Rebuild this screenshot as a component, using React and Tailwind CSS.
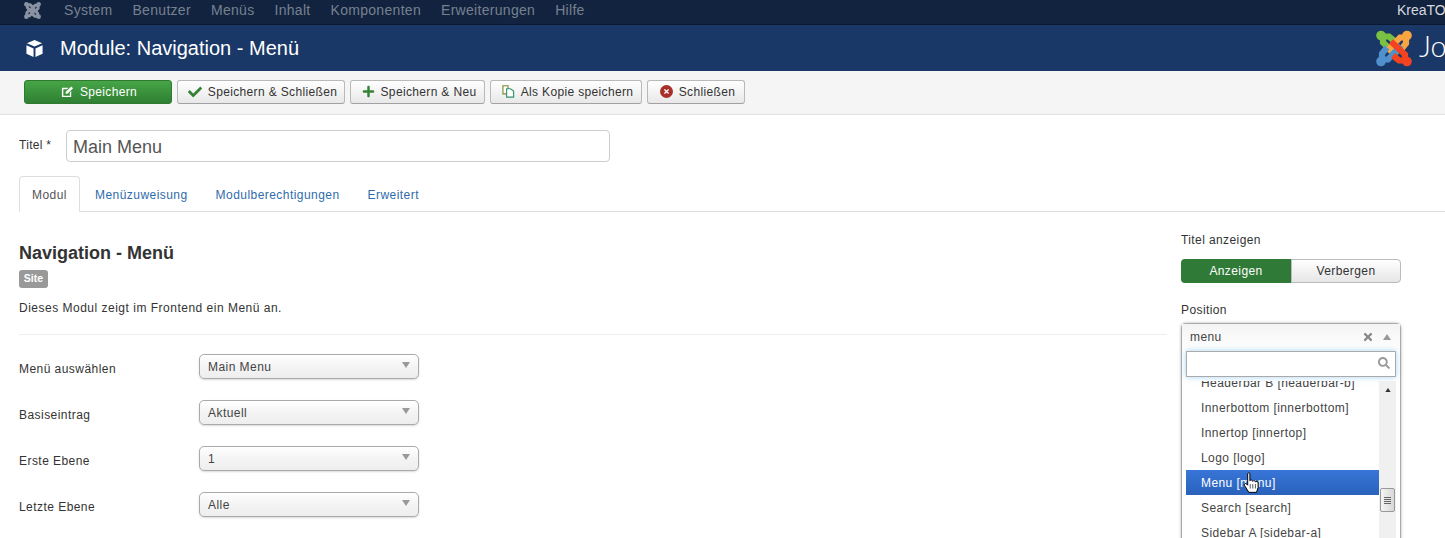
import React from "react";
import { FaCheck, FaPlus, FaTimes, FaSearch } from "react-icons/fa";

const navItems = ["System", "Benutzer", "Menüs", "Inhalt", "Komponenten", "Erweiterungen", "Hilfe"];

const JoomlaMark = ({ className, colors }) => (
    <svg viewBox="0 0 36 36" className={className} fill="none" strokeWidth="6.2">
        {[0, 90, 270, 180].map((angle) => {
            const color = colors[angle / 90];
            return (
                <g key={angle} transform={`rotate(${angle} 18 18)`}>
                    <path d="M19 11 L13 6 L7 6 L7 12 L21 25" stroke={color} />
                    <circle cx="5" cy="5" r="4.8" fill={color} />
                </g>
            );
        })}
    </svg>
);

const CubeIcon = () => (
    <svg viewBox="0 0 20 20" className="w-[19px] h-[19px]" fill="#fff">
        <path d="M10 1 L18 4.5 L10 8 L2 4.5 Z" />
        <path d="M1.5 6.5 L9 10 V19 L1.5 15.5 Z" />
        <path d="M18.5 6.5 L11 10 V19 L18.5 15.5 Z" />
    </svg>
);

const EditIcon = () => (
    <svg viewBox="0 0 14 14" className="w-[13px] h-[13px]">
        <path d="M1 3 H8 L6.5 4.5 H2.5 V11.5 H9.5 V8 L11 6.5 V13 H1 Z" fill="#fff" />
        <path d="M5 7.5 L11 1.5 L13 3.5 L7 9.5 H5 Z" fill="#fff" />
    </svg>
);

const CopyIcon = () => (
    <svg viewBox="0 0 14 14" className="w-[13px] h-[13px]" fill="#fff" strokeWidth="1.2">
        <path d="M1 .8 H6.5 V9.5 H1 Z" stroke="#7a8a2a" />
        <path d="M5 4 H9 L12.5 6.5 V13 H5 Z" stroke="#2f8f6f" />
    </svg>
);

const CloseIcon = () => (
    <span className="w-[13px] h-[13px] rounded-full bg-[#a9302a] flex items-center justify-center">
        <FaTimes className="text-white w-[7px] h-[7px]" />
    </span>
);

const Caret = ({ up, className }) => (
    <svg viewBox="0 0 8 6" className={className}>
        <path d={up ? "M0 6 L4 0 L8 6 Z" : "M0 0 L8 0 L4 6 Z"} fill="currentColor" />
    </svg>
);

const HandCursor = () => (
    <svg viewBox="0 0 14 20" className="absolute left-[1243px] top-[472px] w-[16px] h-[22px]">
        <path d="M4 1.5 C4 .5 6 .5 6 1.5 V8 C6.5 7 8.5 7 8.5 8.5 C9 7.5 11 7.5 11 9 C11.5 8.3 13.5 8.5 13.5 10 V14 L12 18.5 H5 L1 12 C.5 10.5 2 10 3 11 L4 12 Z" fill="#fff" stroke="#000" strokeWidth=".9" />
        <path d="M6.3 11 V15 M8.6 11 V15 M11 11 V15" stroke="#000" strokeWidth=".6" />
    </svg>
);

const ToolbarButton = ({ icon, label, className }) => (
    <button className={`h-[24px] pl-[3px] flex items-center justify-center gap-[6px] rounded-[3px] border border-[#b9b9b9] border-b-[#a2a2a2] bg-linear-to-b from-white to-[#e8e8e8] text-[12px] tracking-[0.35px] text-[#333] ${className}`}>
        {icon}
        {label}
    </button>
);

const SelectRow = ({ label, value }) => (
    <div className="flex items-center h-[26px] mb-[20px]">
        <span className="w-[180px] text-[12px] tracking-[0.45px] text-[#333] pt-[5px]">{label}</span>
        <div className="w-[220px] h-[25px] pl-[8px] pr-[8px] flex items-center justify-between rounded-[5px] border border-[#aaa] bg-linear-to-b from-white via-[#f4f4f4] to-[#eeeeee] shadow-[0_1px_2px_rgba(0,0,0,0.15)] text-[12px] tracking-[0.45px] text-[#444]">
            <span className="mt-[1px]">{value}</span>
            <Caret className="w-[8px] h-[6px] text-[#999] -mt-[2px]" />
        </div>
    </div>
);

const positionItems = [
    "Headerbar B [headerbar-b]",
    "Innerbottom [innerbottom]",
    "Innertop [innertop]",
    "Logo [logo]",
    "Menu [menu]",
    "Search [search]",
    "Sidebar A [sidebar-a]",
];

const TABS = ["Menüzuweisung", "Modulberechtigungen", "Erweitert"];

export default function App() {
    return (
        <div className="relative h-[538px] w-[1445px] overflow-hidden bg-white font-['Liberation_Sans',Arial,sans-serif] text-[#333]">
            {/* top nav */}
            <div className="h-[25px] flex items-center border-b border-[#0a1830] bg-[#12233f]">
                <div className="w-[64px] pl-[24px]">
                    <JoomlaMark className="w-[17px] h-[17px] -mt-[3px]" colors={["#8a93a3", "#8a93a3", "#8a93a3", "#8a93a3"]} />
                </div>
                <div className="flex gap-[20px] text-[14px] tracking-[0.3px] text-[#76818f] -mt-[4px]">
                    {navItems.map((item) => (
                        <span key={item}>{item}</span>
                    ))}
                </div>
                <span className="ml-auto -mr-[10px] w-[58px] shrink-0 text-[14px] text-[#d5d9df] -mt-[4px] whitespace-nowrap">KreaTOM</span>
            </div>

            {/* title bar */}
            <div className="h-[46px] flex items-center bg-[#1a3867] pl-[25px] overflow-hidden">
                <CubeIcon />
                <h1 className="ml-[16px] text-[20px] text-white -mt-[1px]">Module: Navigation - Menü</h1>
                <div className="ml-auto flex items-center w-[69px] shrink-0 overflow-hidden">
                    <JoomlaMark className="w-[36px] h-[37px] shrink-0" colors={["#7ac143", "#f9a541", "#f44321", "#5091cd"]} />
                    <span className="ml-[7px] -mt-[5px] font-['Lato',sans-serif] text-[29px] font-light text-white leading-none">Jo</span>
                </div>
            </div>

            {/* toolbar */}
            <div className="h-[44px] flex items-center gap-[5px] pl-[24px] bg-[#f5f5f5] border-b border-[#e3e3e3] pb-[2px]">
                <button className="w-[148px] h-[24px] pl-[2px] flex items-center justify-center gap-[6px] rounded-[3px] border border-[#2f7a30] bg-linear-to-b from-[#46a546] to-[#2f7f33] text-[12px] tracking-[0.35px] text-white">
                    <EditIcon />
                    Speichern
                </button>
                <ToolbarButton className="w-[168px]" label="Speichern & Schließen" icon={<FaCheck className="text-[#378137] w-[14px] h-[14px]" />} />
                <ToolbarButton className="w-[135px]" label="Speichern & Neu" icon={<FaPlus className="text-[#378137] w-[13px] h-[13px]" />} />
                <ToolbarButton className="w-[152px]" label="Als Kopie speichern" icon={<CopyIcon />} />
                <ToolbarButton className="w-[98px]" label="Schließen" icon={<CloseIcon />} />
            </div>

            {/* title field */}
            <div className="flex items-start pl-[19px] pt-[15px]">
                <label className="w-[47px] text-[12px] tracking-[0.3px] pt-[6px] text-[#333]">Titel *</label>
                <div className="w-[544px] h-[32px] px-[6px] pt-[3px] flex items-center rounded-[4px] border border-[#ccc] bg-white text-[18px] text-[#555]">Main Menu</div>
            </div>

            {/* tabs */}
            <div className="ml-[19px] mt-[14px] h-[36px] flex border-b border-[#ddd] text-[12px] tracking-[0.45px] text-[#2f6cab]">
                <div className="w-[61px] h-[36px] pt-[2px] flex items-center justify-center rounded-t-[4px] border border-[#ddd] border-b-white bg-white text-[#555]">Modul</div>
                <div className="flex gap-[28px] pl-[15px] items-center pt-[2px]">
                    {TABS.map((tab) => (
                        <span key={tab}>{tab}</span>
                    ))}
                </div>
            </div>

            <div className="flex">
                {/* left column */}
                <div className="w-[1148px] ml-[19px]">
                    <h2 className="mt-[30px] text-[18px] leading-[22px] font-bold text-[#333]">Navigation - Menü</h2>
                    <span className="mt-[6px] w-[29px] h-[18px] flex items-center justify-center rounded-[3px] bg-[#999] text-[10.5px] font-bold text-white">Site</span>
                    <p className="mt-[11px] text-[12px] tracking-[0.5px] leading-[18px] text-[#333]">Dieses Modul zeigt im Frontend ein Menü an.</p>
                    <div className="mt-[17px] mb-[18px] border-t border-[#eee]" />
                    <SelectRow label="Menü auswählen" value="Main Menu" />
                    <SelectRow label="Basiseintrag" value="Aktuell" />
                    <SelectRow label="Erste Ebene" value="1" />
                    <SelectRow label="Letzte Ebene" value="Alle" />
                </div>

                {/* right column */}
                <div className="ml-[14px] w-[220px] pt-[19px]">
                    <div className="text-[12px] tracking-[0.4px] leading-[18px] text-[#333]">Titel anzeigen</div>
                    <div className="mt-[10px] h-[24px] flex text-[12px] tracking-[0.4px]">
                        <div className="w-[110px] flex items-center justify-center rounded-l-[4px] bg-[#2f7a36] text-white">Anzeigen</div>
                        <div className="w-[110px] flex items-center justify-center rounded-r-[4px] border border-[#bbb] bg-linear-to-b from-white to-[#e6e6e6] text-[#333]">Verbergen</div>
                    </div>
                    <div className="mt-[18px] text-[12px] tracking-[0.4px] leading-[18px] text-[#333]">Position</div>
                    <div className="mt-[4px] rounded-t-[5px] border border-[#aaa] border-b-0 bg-white shadow-[0_0_3px_rgba(0,0,0,0.3)] h-[300px]">
                        <div className="h-[27px] flex items-center pl-[8px] pr-[9px] text-[12px] tracking-[0.4px] text-[#444] bg-linear-to-b from-[#f4f4f4] to-white">
                            <span className="flex-1 -mt-[2px]">menu</span>
                            <FaTimes className="text-[#888] w-[12px] h-[12px] mr-[9px] -mt-[2px]" />
                            <Caret up className="w-[8px] h-[6px] text-[#999] -mt-[2px]" />
                        </div>
                        <div className="mx-[4px] h-[26px] flex items-center justify-end pr-[5px] border border-[#aaa] bg-white shadow-[0_0_6px_rgba(82,168,236,0.5)]">
                            <FaSearch className="text-[#999] w-[12px] h-[12px] -mt-[3px]" />
                        </div>
                        <div className="mx-[4px] mt-[4px] flex h-[160px] overflow-hidden text-[12px] tracking-[0.42px] text-[#444]">
                            <ul className="w-[193px] -mt-[11px]">
                                {positionItems.map((item) => (
                                    <li key={item} className={`h-[25px] flex items-center pl-[15px] ${item === "Menu [menu]" ? "bg-linear-to-b from-[#3875d7] to-[#2a62bc] text-white" : ""}`}>{item}</li>
                                ))}
                            </ul>
                            <div className="w-[17px] bg-[#f0f0f0] flex flex-col items-center">
                                <Caret up className="w-[6px] h-[4px] text-[#333] mt-[7px]" />
                                <div className="mt-[96px] w-[15px] h-[24px] rounded-[2px] border border-[#999] bg-linear-to-r from-[#f4f4f4] to-[#d8d8d8] flex flex-col items-center justify-center gap-[1px]">
                                    <span className="w-[7px] h-px bg-[#666]" />
                                    <span className="w-[7px] h-px bg-[#666]" />
                                    <span className="w-[7px] h-px bg-[#666]" />
                                    <span className="w-[7px] h-px bg-[#666]" />
                                </div>
                            </div>
                        </div>
                    </div>
                </div>
            </div>

            <HandCursor />
        </div>
    );
}
